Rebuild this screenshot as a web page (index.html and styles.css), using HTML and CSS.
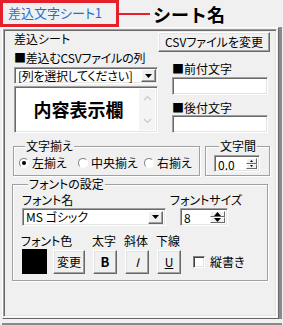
FILE: index.html
```html
<!DOCTYPE html>
<html lang="ja">
<head>
    <meta charset="UTF-8"/>
    <title>差込文字シート</title>
    <link rel="stylesheet" href="styles.css">
</head>
<body>
    <header class="title-row">
        <div class="tab-label">差込文字シート1</div>
        <div class="callout-line"></div>
        <div class="callout-text">シート名</div>
    </header>

    <div class="frame">
        <main class="page">
            <section class="top">
                <div class="left-col">
                    <div class="caption first">差込シート</div>
                    <div class="caption second">■差込むCSVファイルの列</div>
                    <div class="combo column-combo">
                        <span class="combo-text">[列を選択してください]</span>
                        <span class="drop-btn"><svg width="7" height="4" viewBox="0 0 7 4"><path d="M0 0h7L3.5 4z" fill="#000"/></svg></span>
                    </div>
                    <div class="preview">
                        <div class="preview-text">内容表示欄</div>
                        <div class="scroll">
                            <svg width="9" height="6" viewBox="0 0 9 6"><path d="M1 5L4.5 1.5 8 5" fill="none" stroke="#c8c8c8" stroke-width="1.2"/></svg>
                            <svg width="9" height="6" viewBox="0 0 9 6"><path d="M1 1l3.5 3.5L8 1" fill="none" stroke="#c8c8c8" stroke-width="1.2"/></svg>
                        </div>
                    </div>
                </div>
                <div class="right-col">
                    <button class="btn csv-btn">CSVファイルを変更</button>
                    <div class="caption pre-label">■前付文字</div>
                    <div class="field affix"></div>
                    <div class="caption post-label">■後付文字</div>
                    <div class="field affix tall"></div>
                </div>
            </section>

            <section class="group-row">
                <fieldset class="group align-group">
                    <legend>文字揃え</legend>
                    <div class="radios">
                        <div class="radio-item w1"><span class="radio checked"></span><span>左揃え</span></div>
                        <div class="radio-item w2"><span class="radio"></span><span>中央揃え</span></div>
                        <div class="radio-item"><span class="radio"></span><span>右揃え</span></div>
                    </div>
                </fieldset>
                <fieldset class="group spacing-group">
                    <legend>文字間</legend>
                    <div class="spin small-spin">
                        <span class="spin-text">0.0</span>
                        <span class="spin-btns">
                            <span class="spin-btn"><svg width="3" height="2" viewBox="0 0 3 2"><path d="M1.5 0L3 2H0z" fill="#000"/></svg></span>
                            <span class="spin-btn"><svg width="3" height="2" viewBox="0 0 3 2"><path d="M0 0h3L1.5 2z" fill="#000"/></svg></span>
                        </span>
                    </div>
                </fieldset>
            </section>

            <fieldset class="group font-group">
                <legend>フォントの設定</legend>
                <div class="font-labels">
                    <span class="name-label">フォント名</span>
                    <span>フォントサイズ</span>
                </div>
                <div class="font-inputs">
                    <div class="combo font-combo">
                        <span class="combo-text">MS ゴシック</span>
                        <span class="drop-btn"><svg width="7" height="4" viewBox="0 0 7 4"><path d="M0 0h7L3.5 4z" fill="#000"/></svg></span>
                    </div>
                    <div class="spin size-spin">
                        <span class="spin-text">8</span>
                        <span class="spin-btns">
                            <span class="spin-btn"><svg width="7" height="4" viewBox="0 0 7 4"><path d="M3.5 0L7 4H0z" fill="#000"/></svg></span>
                            <span class="spin-btn"><svg width="7" height="4" viewBox="0 0 7 4"><path d="M0 0h7L3.5 4z" fill="#000"/></svg></span>
                        </span>
                    </div>
                </div>
                <div class="style-grid">
                    <span class="lbl color-lbl">フォント色</span>
                    <span class="lbl">太字</span>
                    <span class="lbl">斜体</span>
                    <span class="lbl">下線</span>
                    <span></span>
                    <div class="swatch"></div>
                    <button class="btn change-btn">変更</button>
                    <button class="btn style-btn bold">B</button>
                    <button class="btn style-btn italic">I</button>
                    <button class="btn style-btn under">U</button>
                    <label class="check"><span class="box"></span>縦書き</label>
                </div>
            </fieldset>
        </main>
    </div>
    <div class="frame-foot"></div>
</body>
</html>
```

FILE: styles.css
```css
* {
    margin: 0;
    padding: 0;
    box-sizing: border-box;
}

body {
    font-family: "Noto Sans CJK JP", sans-serif;
    font-size: 12px;
    line-height: 14px;
    font-feature-settings: "palt";
    color: #000;
    background-color: #f0f0f0;
    width: 283px;
    height: 325px;
    overflow: hidden;
}

/* top title */
.title-row {
    display: flex;
    align-items: center;
    height: 27px;
}

.tab-label {
    width: 119px;
    height: 27px;
    border: 3px solid #e5202a;
    color: #1c6fd6;
    font-size: 13px;
    line-height: 19px;
    padding-left: 5px;
}

.callout-line {
    width: 31px;
    height: 2px;
    background-color: #e5202a;
}

.callout-text {
    font-size: 18px;
    font-weight: bold;
    font-feature-settings: normal;
    margin-left: 3px;
    line-height: 20px;
}

/* frame around the sheet */
.frame {
    margin-left: 2px;
    width: 277px;
    border: 1px solid;
    border-color: #fff #696969 #696969 #fff;
    padding: 1px 1px 1px 0;
    box-shadow: 3px 0 0 #8a8a8a;
}

.page {
    height: 288px;
    border: 1px solid;
    border-color: #a0a0a0 #fff #fff #a0a0a0;
    box-shadow: inset 1px 1px 0 #696969, inset -1px -1px 0 #e3e3e3;
}

.frame-foot {
    margin-top: 4px;
    margin-left: 2px;
    width: 280px;
    border-top: 3px solid #8a8a8a;
}

/* common controls */
.btn {
    font-family: inherit;
    font-size: 12px;
    line-height: 14px;
    font-feature-settings: "palt";
    color: #000;
    background-color: #f0f0f0;
    border: 1px solid;
    border-color: #fff #696969 #696969 #fff;
    box-shadow: inset -1px -1px 0 #a0a0a0, inset 1px 1px 0 #e3e3e3;
}

.field,
.combo,
.spin,
.preview {
    background-color: #fff;
    border: 1px solid;
    border-color: #a0a0a0 #fff #fff #a0a0a0;
    box-shadow: inset 1px 1px 0 #696969, inset -1px -1px 0 #e3e3e3;
}

.combo {
    display: flex;
    align-items: center;
    justify-content: space-between;
    padding: 2px;
}

.combo-text {
    padding-left: 1px;
}

.drop-btn {
    width: 15px;
    height: 13px;
    display: flex;
    align-items: center;
    justify-content: center;
    background-color: #f0f0f0;
    border: 1px solid;
    border-color: #fff #696969 #696969 #fff;
    box-shadow: inset -1px -1px 0 #a0a0a0;
}

.spin {
    display: flex;
    padding: 2px;
}

.spin-text {
    flex: 1;
    padding-left: 1px;
}

.spin-btns {
    display: flex;
    flex-direction: column;
}

.spin-btn {
    flex: 1;
    display: flex;
    align-items: center;
    justify-content: center;
    background-color: #f0f0f0;
    border: 1px solid;
    border-color: #fff #696969 #696969 #fff;
}

/* upper area */
.top {
    display: flex;
    padding-left: 10px;
}

.left-col {
    width: 144px;
}

.caption.first {
    margin-top: 2px;
}

.caption.second {
    margin-top: 5px;
    letter-spacing: -0.2px;
}

.column-combo {
    margin-top: 2px;
    height: 17px;
    padding-right: 1px;
}

.column-combo .combo-text {
    letter-spacing: -0.3px;
}

.preview {
    margin-top: 2px;
    height: 47px;
    display: flex;
}

.preview-text {
    flex: 1;
    text-align: center;
    font-size: 18px;
    font-weight: bold;
    font-feature-settings: normal;
    line-height: 45px;
    padding-left: 3px;
}

.scroll {
    width: 16px;
    margin: 2px 2px 2px 0;
    background-color: #f4f4f4;
    display: flex;
    flex-direction: column;
    align-items: center;
    justify-content: space-between;
    padding: 6px 0;
}

.csv-btn {
    margin-top: 2px;
    width: 112px;
    height: 20px;
}

.pre-label {
    margin-top: 10px;
    margin-left: 14px;
}

.post-label {
    margin-top: 6px;
    margin-left: 14px;
}

.affix {
    margin-left: 14px;
    margin-top: 1px;
    width: 96px;
    height: 18px;
}

.affix.tall {
    margin-top: 0;
}

/* group boxes */
.group {
    border: 1px solid #a0a0a0;
    box-shadow: inset 1px 1px 0 #fff, 1px 1px 0 #fff;
}

.group legend {
    margin-left: 6px;
    padding: 0 1px;
    line-height: 14px;
    background-color: #f0f0f0;
}

.group-row {
    display: flex;
    gap: 5px;
    margin-top: 6px;
    margin-left: 9px;
}

.align-group {
    width: 187px;
    padding: 3px 0 5px 5px;
}

.radios {
    display: flex;
    align-items: center;
}

.radio-item {
    display: flex;
    align-items: center;
}

.radio-item.w1 {
    width: 59px;
}

.radio-item.w2 {
    width: 66px;
}

.radio {
    width: 10px;
    height: 10px;
    border-radius: 50%;
    border: 1px solid;
    border-color: #808080 #fff #fff #808080;
    background-color: #fff;
    margin-right: 3px;
    display: flex;
    align-items: center;
    justify-content: center;
}

.radio.checked::after {
    content: "";
    width: 4px;
    height: 4px;
    border-radius: 50%;
    background-color: #000;
}

.spacing-group {
    width: 65px;
    padding: 2px 0 0 8px;
}

.spacing-group legend {
    margin-left: 5px;
}

.small-spin {
    width: 46px;
    height: 17px;
}

.small-spin .spin-btns {
    width: 11px;
}

.font-group {
    margin-top: 1px;
    margin-left: 8px;
    width: 256px;
    padding: 2px 0 6px 9px;
}

.font-labels {
    display: flex;
    line-height: 13px;
}

.name-label {
    width: 148px;
}

.font-inputs {
    display: flex;
    margin-top: 2px;
    gap: 14px;
}

.font-combo {
    width: 144px;
    height: 18px;
}

.size-spin {
    width: 48px;
    height: 18px;
}

.size-spin .spin-btns {
    width: 15px;
}

.style-grid {
    display: grid;
    grid-template-columns: 31px 40px 32px 32px 36px auto;
    grid-template-rows: 14px 25px;
    row-gap: 1px;
    margin-top: 8px;
    align-items: center;
}

.color-lbl {
    grid-column: span 2;
}

.lbl {
    margin-left: -1px;
}

.swatch {
    width: 25px;
    height: 25px;
    background-color: #000;
}

.change-btn {
    width: 32px;
    height: 24px;
}

.style-btn {
    width: 24px;
    height: 24px;
    font-feature-settings: normal;
}

.bold {
    font-weight: bold;
    font-size: 13px;
}

.italic {
    font-style: italic;
}

.under {
    text-decoration: underline;
}

.check {
    display: flex;
    align-items: center;
}

.check .box {
    width: 12px;
    height: 12px;
    margin-right: 5px;
    background-color: #fff;
    border: 1px solid;
    border-color: #808080 #fff #fff #808080;
    box-shadow: inset 1px 1px 0 #404040, inset -1px -1px 0 #e3e3e3;
}
```
